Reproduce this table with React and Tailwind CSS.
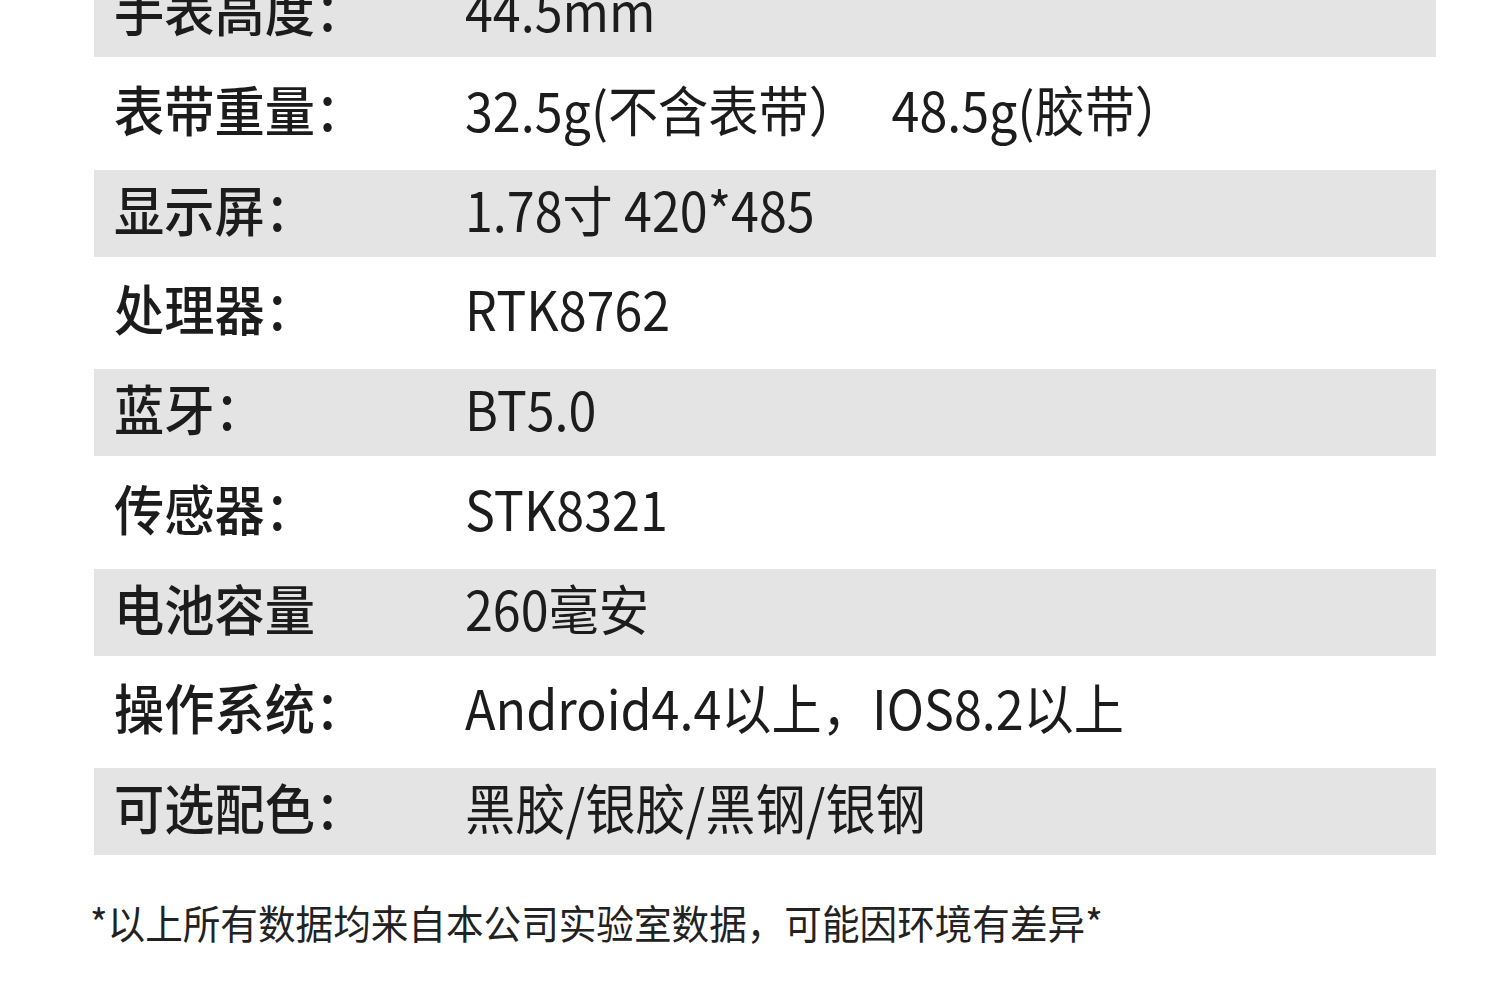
const specs = [
    { label: '手表高度：', value: '44.5mm' },
    { label: '表带重量：', value: '32.5g(不含表带）', extra: '48.5g(胶带）' },
    { label: '显示屏：', value: '1.78寸 420*485' },
    { label: '处理器：', value: 'RTK8762' },
    { label: '蓝牙：', value: 'BT5.0' },
    { label: '传感器：', value: 'STK8321' },
    { label: '电池容量', value: '260毫安' },
    { label: '操作系统：', value: 'Android4.4以上，IOS8.2以上' },
    { label: '可选配色：', value: '黑胶/银胶/黑钢/银钢' },
];

function SpecRow({ label, value, extra, shaded }) {
    return (
        <div className={shaded ? 'flex items-center h-[87px] pb-[8px] bg-[#e4e4e4]' : 'flex items-center h-[112.5px] pb-[8px] bg-white'}>
            <div className="w-[371px] pl-[20px]">
                <span className="inline-block origin-left scale-x-[0.93] whitespace-nowrap text-[54px] leading-none font-medium text-[#1c1c1c]">
                    {label}
                </span>
            </div>
            <div className="flex-1">
                <span className="inline-block origin-left scale-x-[0.93] whitespace-nowrap text-[54px] leading-none text-[#1c1c1c]">
                    {value}
                    {extra && <span className="ml-[35px]">{extra}</span>}
                </span>
            </div>
        </div>
    );
}

export default function App() {
    return (
        <div className="h-[985px] overflow-hidden bg-white font-['Noto_Sans_CJK_SC',sans-serif]">
            <div className="-mt-[30px] ml-[94px] w-[1342px]">
                {specs.map((s, i) => (
                    <SpecRow key={s.label} {...s} shaded={i % 2 === 0} />
                ))}
            </div>
            <div className="mt-[47px] pl-[90px]">
                <span className="inline-block origin-left scale-x-[0.94] whitespace-nowrap text-[40px] leading-none text-[#222]">
                    *以上所有数据均来自本公司实验室数据，可能因环境有差异*
                </span>
            </div>
        </div>
    );
}
